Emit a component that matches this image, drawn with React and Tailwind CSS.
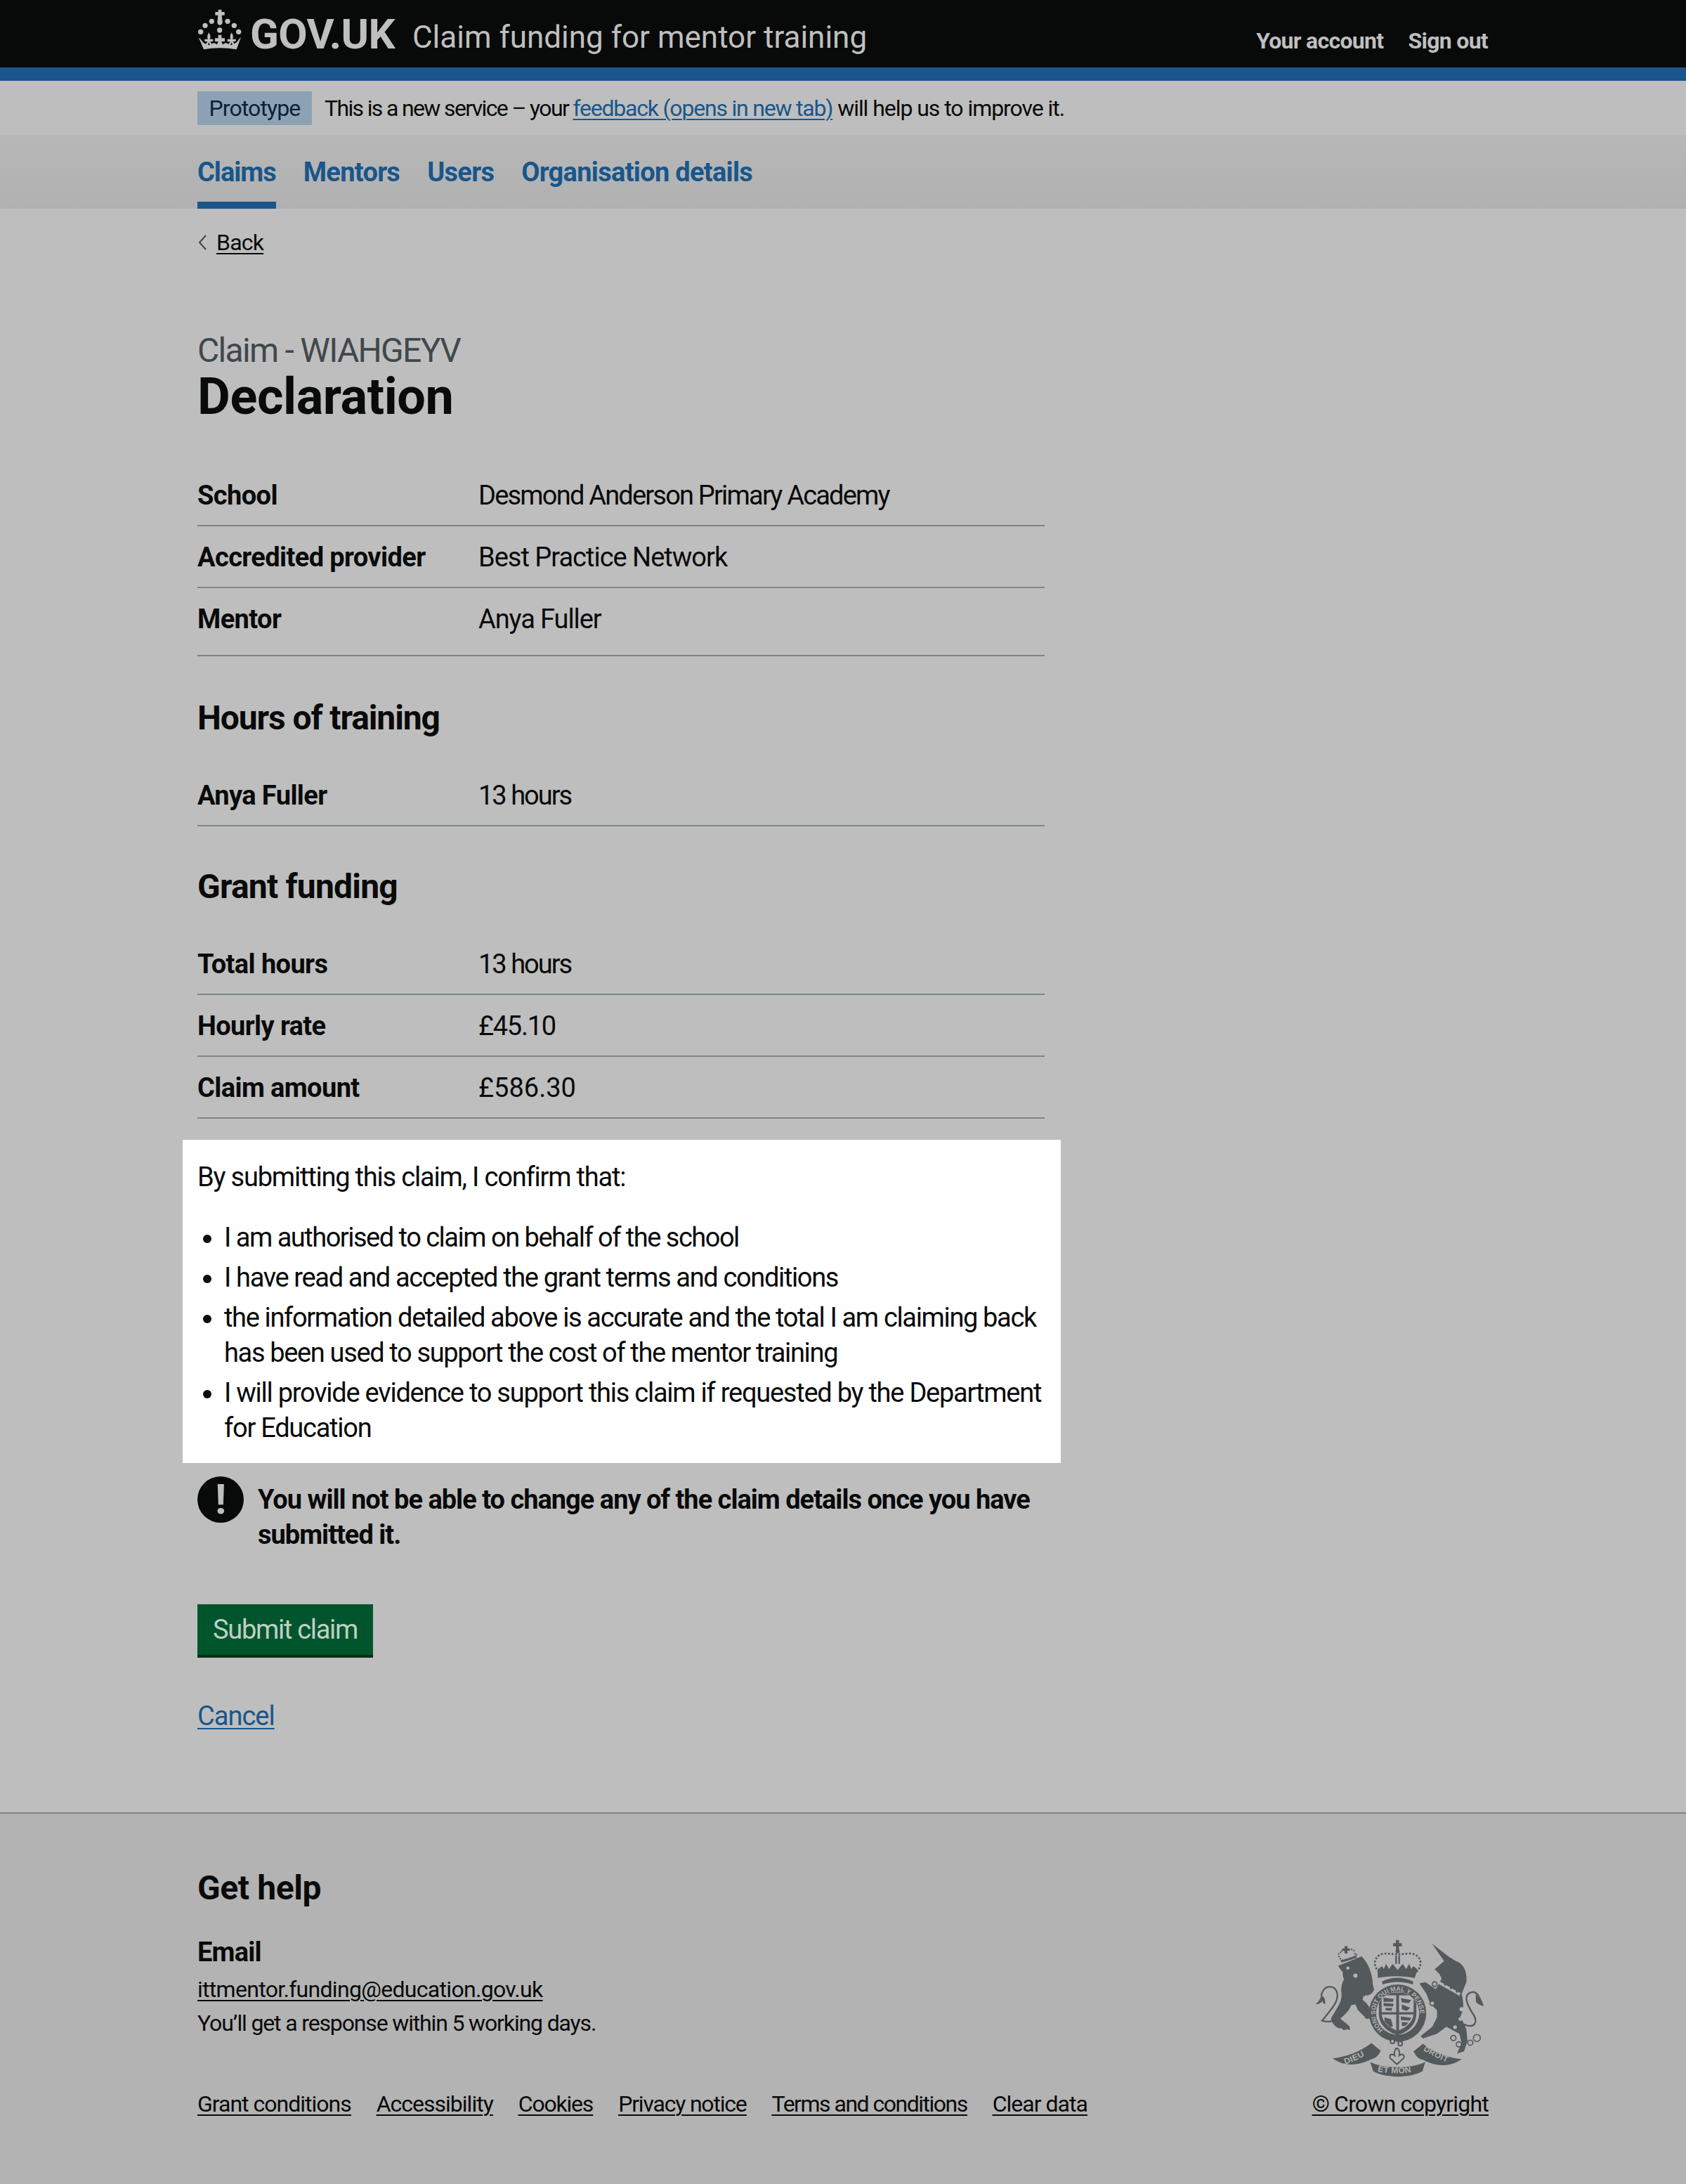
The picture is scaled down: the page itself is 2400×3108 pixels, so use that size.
const sans = "font-['Roboto',sans-serif]"

const summaryRow = (label, value, valueClass, last) => (
  <div key={label} className={`flex border-b-2 border-[#7e8486] ${last ? 'h-[97px]' : 'h-[88px]'}`}>
    <dt className="w-[400px] pt-[19px] font-bold tracking-[-0.6px]">{label}</dt>
    <dd className={`pt-[19px] ${valueClass}`}>{value}</dd>
  </div>
)

const Crown = () => (
  <svg viewBox="30 35 190 180" className="mt-[3px] w-[64px] h-[60px] fill-[#bfbfbf]">
    <path d="M118 40h14v10h13v14h-12l3 30c0 6-5 12-11 12s-11-6-11-12l3-30h-12V50h13z" />
    <circle cx="90" cy="90" r="11" />
    <circle cx="158" cy="90" r="11" />
    <circle cx="62" cy="108" r="11" />
    <circle cx="186" cy="108" r="11" />
    <circle cx="43" cy="135" r="11" />
    <circle cx="205" cy="135" r="11" />
    <circle cx="124" cy="128" r="11" />
    <path d="M78 138c6 10 9 18 4 28h14v10H84l8 14-8 4-6-14-6 14-8-4 8-14H60v-10h14c-5-10-2-18 4-28z" />
    <path d="M175 138c6 10 9 18 4 28h14v10h-12l8 14-8 4-6-14-6 14-8-4 8-14h-12v-10h14c-5-10-2-18 4-28z" />
    <path d="M118 148h14v14h14v14h-14l6 16-13 6-13-6 6-16h-14v-14h14z" />
    <path d="M35 160c13 8 15 20 25 24l20 8 20-10 25 13 25-13 22 10 18-8c10-4 13-16 25-26l-19 52c-46-8-96-8-140 0z" />
  </svg>
)

const Crest = () => (
  <svg viewBox="100 55 725 590" className="w-[242px] h-[197px] fill-[#54595b]">
    {/* royal crown */}
    <path d="M445 60h13v14h12v13h-12v14h-13V87h-12V74h12z" />
    <circle cx="452" cy="108" r="9" />
    <path d="M400 118c-28 0-45 20-45 40 0 16 8 28 18 38M505 118c28 0 45 20 45 40 0 16-8 28-18 38M400 118c24 0 44 6 52 0 8 6 28 0 53 0" fill="none" stroke="#54595b" strokeWidth="9" strokeLinecap="round" strokeDasharray="0.1 15" />
    <rect x="442" y="126" width="7" height="36" />
    <rect x="455" y="126" width="7" height="36" />
    <path d="M367 186l18-14 8 12 10-22 12 22 16-22 21 26 21-26 16 22 12-22 10 22 8-12 18 14-12 36c-50-10-110-10-158 0z" />
    <path d="M385 238c40-22 90-22 134 0l-3 12c-40-14-88-14-128 0z" />
    {/* lion crown */}
    <path d="M226 86h12v10h10v10h-10v12h-12v-12h-10V96h10z" />
    <path d="M208 140c-12-14-10-32 8-26M270 118c10-2 8 8 4 18M225 104c-8 0-12 2-15 6M245 100c10 0 20 0 26 12" fill="none" stroke="#54595b" strokeWidth="7" strokeLinecap="round" strokeDasharray="0.1 11" />
    <path d="M208 146c20-4 46-10 68-22l-2 12c-20 10-44 16-62 20z" />
    {/* lion */}
    <path d="M198 170l42-16 58-24c20 20 46 60 48 118l6 24c-8 16-18 26-38 24l-12 16 4 6c18 16 34 34 26 48l24 20-14 4c-2 6-10 8-14 4-6 6-14 2-16-6l-30-30-10-24c-6 2-14 2-18 4-8 24-26 38-46 58l32 26c6 4 12 14 8 24-8-8-14-6-20-2-8 2-12-4-16-8l-12 0c-18-8-30-26-32-42l26-44c14-20 22-46 18-66-2-24 2-40 12-56-6-8-6-22-6-30z" />
    <path d="M200 396c-24 14-50 14-70 8 12-16 44-50 58-78 16-34 4-70-30-66-16 2-28 16-32 40" fill="none" stroke="#54595b" strokeWidth="7" />
    <path d="M126 300c-4 14-14 26-24 34 12 0 22-4 30-14 2 8 4 12 10 14 4-12 0-24-8-34z" />
    <path d="M308 298c20 14 34 40 44 60l-6 4c-10-20-26-44-42-58z" fill="#b3b3b3" />
    <circle cx="240" cy="180" r="7" fill="#b3b3b3" />
    <circle cx="272" cy="212" r="9" fill="#b3b3b3" />
    {/* unicorn */}
    <path d="M598 75l70 55 32 20c35 10 50 50 45 90l-20 50c10 40 10 70-5 95l25 55 5 50-15 45-30 10 20-45-10-40-55-30-40 30-60 20-10-10 50-40 20-40v-30l-30-30-15-40-30-45 25-5 45 30 25-45-10-20-20-20 40-35z" />
    <path d="M630 236l90 50-4 12-92-52z" fill="#b3b3b3" />
    <circle cx="655" cy="250" r="5" />
    <circle cx="680" cy="265" r="5" />
    <circle cx="705" cy="280" r="5" />
    <circle cx="610" cy="248" r="10" fill="#b3b3b3" stroke="#54595b" strokeWidth="5" />
    <circle cx="600" cy="330" r="10" fill="#b3b3b3" stroke="#54595b" strokeWidth="5" />
    <circle cx="725" cy="355" r="9" fill="#b3b3b3" />
    <circle cx="720" cy="397" r="8" fill="#b3b3b3" />
    <circle cx="697" cy="432" r="8" fill="#b3b3b3" />
    <path d="M735 420c45 20 65-10 35-50-25-40-40-80 0-88 20-2 30 18 45 58" fill="none" stroke="#54595b" strokeWidth="7" />
    <path d="M785 290c12 16 24 34 35 52-14-2-26-8-34-18z" />
    <g fill="none" stroke="#54595b" strokeWidth="5">
      <circle cx="690" cy="478" r="11" />
      <circle cx="713" cy="505" r="11" />
      <circle cx="762" cy="498" r="11" />
      <circle cx="790" cy="478" r="15" />
    </g>
    {/* garter and shield */}
    <circle cx="452" cy="372" r="122" />
    <circle cx="452" cy="372" r="92" fill="#b3b3b3" />
    <path id="garter" d="M390 444A95 95 0 1 1 514 444" fill="none" />
    <text fontSize="27" fill="#b3b3b3" fontFamily="Liberation Sans, sans-serif" fontWeight="700">
      <textPath href="#garter">HONI SOIT QUI MAL Y PENSE</textPath>
    </text>
    <clipPath id="inner"><circle cx="452" cy="372" r="90" /></clipPath>
    <g clipPath="url(#inner)">
      <path d="M372 284h160v90c0 50-40 80-80 92-40-12-80-42-80-92z" />
      <path d="M384 296h62v72h-62zM458 296h62v72h-62zM384 378h62v68c-30-14-58-34-62-68zM458 378h62c-4 34-32 54-62 68z" fill="#b3b3b3" />
      <path d="M392 306l44 6-4 12-40 0zM392 328l44 4-4 12-40-2zM400 350l30 0-4 12-26-2zM466 308l44 8-10 14-30-4zM470 335l36 14-16 14-20-8zM466 386l44 6-6 12-38-2zM470 410l28 2-10 12-18 4zM396 390l28 8 8 30-10 4-26-24z" />
    </g>
    <path d="M445 455h13v22h-13z" />
    <circle cx="430" cy="492" r="9" fill="#b3b3b3" stroke="#54595b" strokeWidth="6" />
    <circle cx="463" cy="502" r="9" fill="#b3b3b3" stroke="#54595b" strokeWidth="6" />
    {/* motto ribbons and fleur */}
    <path d="M445 522c-6 10-10 18-6 30-8-6-22-6-20 8 2 10 12 10 16 18l14 12 14-12c4-8 14-8 16-18 2-14-12-14-20-8 4-12 0-20-6-30z" fill="none" stroke="#54595b" strokeWidth="6" />
    <path d="M175 565c60-6 120-30 165-65l40 32c-10 20-20 32-40 36-50 26-110 36-165-3z" />
    <path d="M725 568c-60-6-120-30-165-65l-40 32c10 20 20 32 40 36 50 26 110 36 165-3z" />
    <path d="M335 580c50 30 180 30 235 0l-12 40c-50 30-160 30-210 0z" />
    <path id="dieu" d="M228 590c40-10 70-30 110-52" fill="none" />
    <text fontSize="36" fill="#b3b3b3" fontFamily="Liberation Sans, sans-serif" fontWeight="700" letterSpacing="2">
      <textPath href="#dieu">DIEU</textPath>
    </text>
    <path id="droit" d="M560 530c40 24 70 40 124 60" fill="none" />
    <text fontSize="34" fill="#b3b3b3" fontFamily="Liberation Sans, sans-serif" fontWeight="700" letterSpacing="2">
      <textPath href="#droit">DROIT</textPath>
    </text>
    <path id="etmon" d="M366 620c50 12 130 12 172-4" fill="none" />
    <text fontSize="36" fill="#b3b3b3" fontFamily="Liberation Sans, sans-serif" fontWeight="700" letterSpacing="1">
      <textPath href="#etmon">ET MON</textPath>
    </text>
  </svg>
)

export default function App() {
  return (
    <div className={`min-h-[3108px] bg-[#bebebe] text-[38px] leading-[50px] text-[#090a0a] ${sans}`}>
      {/* Header */}
      <header className="h-[115px] bg-[#080a0a] border-b-[19px] border-[#18568b]">
        <div className="flex justify-between pl-[281px] pr-[282px]">
          <div className="flex items-start pt-[9px]">
            <Crown />
            <span className="ml-[11px] mt-[10px] text-[60px] leading-[60px] font-bold text-[#bfbfbf] tracking-[-0.6px]">GOV.UK</span>
            <span className="ml-[25px] mt-[14px] text-[44px] leading-[60px] text-[#bfbfbf]">Claim funding for mentor training</span>
          </div>
          <nav className="flex gap-[35px] pt-[36px] text-[32px] leading-[44px] font-bold text-[#bfbfbf] tracking-[-0.7px]">
            <a>Your account</a>
            <a>Sign out</a>
          </nav>
        </div>
      </header>

      {/* Phase banner */}
      <div className="h-[77px] pl-[281px] pt-[15px] flex items-start text-[32px] leading-[48px]">
        <span className="w-[163px] h-[48px] bg-[#8ca2b4] text-center text-[#0b2137] tracking-[-0.9px]">Prototype</span>
        <span className="ml-[18px] tracking-[-1.05px]">
          <span className="tracking-[-1.65px]">This is a new service – your </span>
          <a className="text-[#18568b] underline decoration-2 underline-offset-4 tracking-[-1.2px]">feedback (opens in new tab)</a> will help us to improve it.
        </span>
      </div>

      {/* Nav */}
      <nav className="h-[105px] bg-gradient-to-b from-[#b7b7b7] to-[#b1b1b1] pl-[281px] flex gap-[39px] font-bold text-[#18568b] tracking-[-0.7px]">
        <a className="h-[105px] pt-[28px] border-b-[10px] border-[#18568b] tracking-[-1px]">Claims</a>
        <a className="pt-[28px]">Mentors</a>
        <a className="pt-[28px]">Users</a>
        <a className="pt-[28px]">Organisation details</a>
      </nav>

      <main className="pl-[281px] w-[1487px]">
        <a className="flex items-center mt-[24px] h-[48px] text-[32px] leading-[48px] tracking-[-0.8px]">
          <svg viewBox="0 0 14 24" className="w-[14px] h-[24px] mr-[13px] fill-none stroke-[#444] stroke-[2px]"><path d="M12 2L3 12l9 10" /></svg>
          <span className="underline decoration-2 underline-offset-4">Back</span>
        </a>

        <p className="mt-[100px] text-[48px] leading-[60px] text-[#40484c] tracking-[-1.7px]">Claim - WIAHGEYV</p>
        <h1 className="text-[72px] leading-[72px] font-bold tracking-[-0.4px]">Declaration</h1>

        <dl className="mt-[60px] w-[1206px]">
          {summaryRow('School', 'Desmond Anderson Primary Academy', 'tracking-[-1.8px]')}
          {summaryRow('Accredited provider', 'Best Practice Network', 'tracking-[-1px]')}
          {summaryRow('Mentor', 'Anya Fuller', 'tracking-[-1.1px]', true)}
        </dl>

        <h2 className="mt-[58px] text-[48px] leading-[60px] font-bold tracking-[-1.1px]">Hours of training</h2>
        <dl className="mt-[36px] w-[1206px]">
          {summaryRow('Anya Fuller', '13 hours', 'tracking-[-2px]')}
        </dl>

        <h2 className="mt-[56px] text-[48px] leading-[60px] font-bold tracking-[-0.8px]">Grant funding</h2>
        <dl className="mt-[36px] w-[1206px]">
          {summaryRow('Total hours', '13 hours', 'tracking-[-2px]')}
          {summaryRow('Hourly rate', '£45.10', 'tracking-[-1.3px]')}
          {summaryRow('Claim amount', '£586.30')}
        </dl>

        {/* Declaration box */}
        <section className="-ml-[21px] mt-[30px] w-[1250px] h-[460px] bg-white pl-[21px] pt-[28px] tracking-[-1.4px]">
          <p className="tracking-[-1.2px]">By submitting this claim, I confirm that:</p>
          <ul className="mt-[36px] pl-[38px] list-disc w-[1228px]">
            <li className="mb-[7px] tracking-[-1.5px]">I am authorised to claim on behalf of the school</li>
            <li className="mb-[7px] tracking-[-1.35px]">I have read and accepted the grant terms and conditions</li>
            <li className="mb-[7px] tracking-[-1.35px]">the information detailed above is accurate and the total I am claiming back has been used to support the cost of the mentor training</li>
            <li className="tracking-[-1.25px]">I will provide evidence to support this claim if requested by the Department for Education</li>
          </ul>
        </section>

        {/* Warning */}
        <div className="mt-[19px] flex w-[1206px]">
          <span className="shrink-0 w-[66px] h-[66px] rounded-full bg-[#080a0a] text-[#bfbfbf] text-[60px] leading-[66px] font-bold text-center">!</span>
          <strong className="ml-[20px] pt-[8px] font-bold tracking-[-1px]">You will not be able to change any of the claim details once you have submitted it.</strong>
        </div>

        <button className="block mt-[74px] w-[250px] h-[76px] bg-[#00552c] border-b-[4px] border-[#002d18] text-[#bfcfc6] leading-[72px] tracking-[-1.3px]">Submit claim</button>

        <a className="block mt-[58px] w-fit text-[#18568b] underline decoration-2 underline-offset-4 tracking-[-1px]">Cancel</a>
      </main>

      {/* Footer */}
      <footer className="mt-[112px] h-[530px] border-t-2 border-[#7e8486] bg-[#b3b3b3] pl-[281px] pr-[281px] pt-[76px]">
        <h2 className="text-[48px] leading-[60px] font-bold tracking-[-0.4px]">Get help</h2>
        <div className="flex justify-between items-end">
          <div>
            <h3 className="mt-[36px] font-bold tracking-[-0.8px]">Email</h3>
            <a className="block mt-[4px] text-[32px] leading-[48px] underline decoration-2 underline-offset-4 tracking-[-0.7px]">ittmentor.funding@education.gov.uk</a>
            <p className="text-[32px] leading-[48px] tracking-[-1.15px]">You’ll get a response within 5 working days.</p>
            <div className="mt-[67px] flex gap-[36px] text-[32px] leading-[48px] underline decoration-2 underline-offset-4 tracking-[-1px]">
              <a>Grant conditions</a>
              <a>Accessibility</a>
              <a className="tracking-[-1.2px]">Cookies</a>
              <a className="tracking-[-1.2px]">Privacy notice</a>
              <a className="tracking-[-1.5px]">Terms and conditions</a>
              <a>Clear data</a>
            </div>
          </div>
          <div className="flex flex-col items-center">
            <Crest />
            <a className="mt-[14px] text-[32px] leading-[48px] underline decoration-2 underline-offset-4 tracking-[-0.8px]">© Crown copyright</a>
          </div>
        </div>
      </footer>
    </div>
  )
}
